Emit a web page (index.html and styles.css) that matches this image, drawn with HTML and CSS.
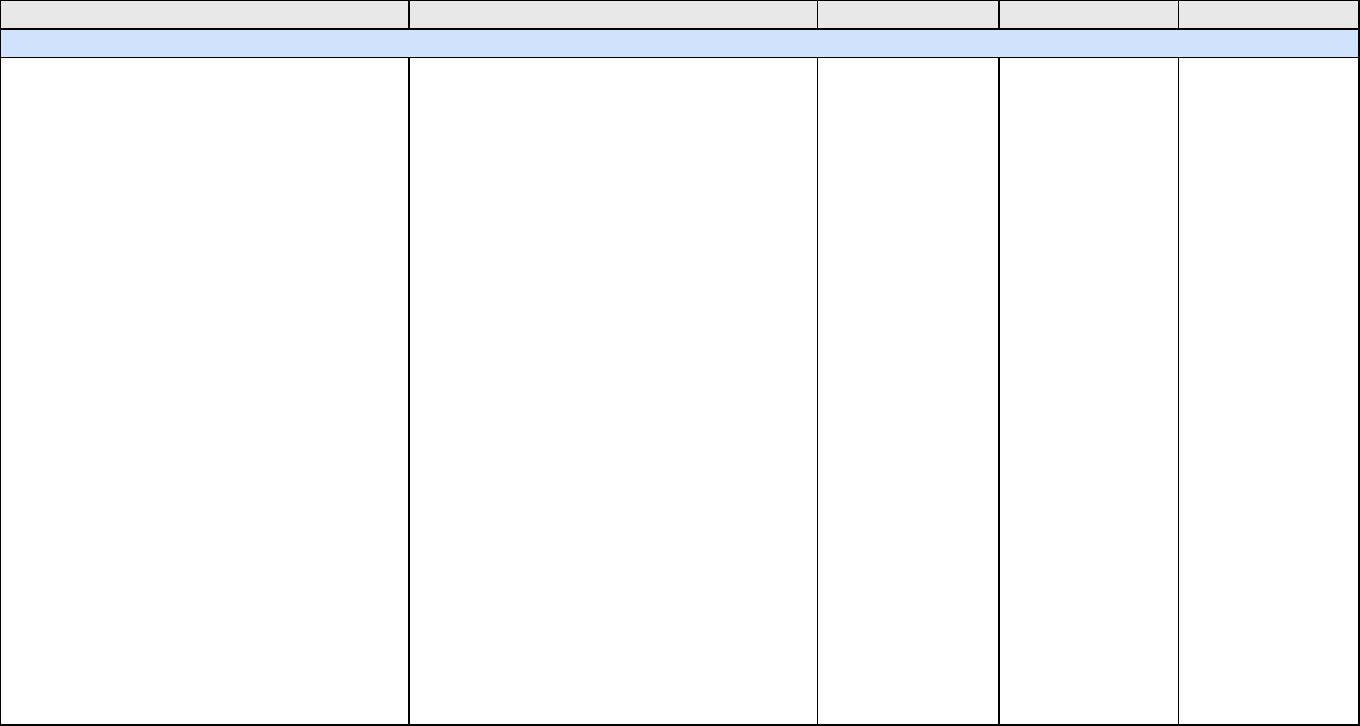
FILE: index.html
```html
<!DOCTYPE html>
<html lang="en">
<head>
    <meta charset="UTF-8">
    <meta name="viewport" content="width=device-width, initial-scale=1.0">
    <title>Sheet</title>
    <link rel="stylesheet" href="styles.css">
</head>
<body>
    <div class="sheet">
        <div class="row head-row">
            <div class="cell"></div>
            <div class="cell"></div>
            <div class="cell"></div>
            <div class="cell"></div>
            <div class="cell"></div>
        </div>
        <div class="band"></div>
        <div class="row body-row">
            <div class="cell"></div>
            <div class="cell"></div>
            <div class="cell"></div>
            <div class="cell"></div>
            <div class="cell"></div>
        </div>
    </div>
</body>
</html>
```

FILE: styles.css
```css
html, body {
    margin: 0;
    padding: 0;
    background-color: #fff;
    font-family: 'Liberation Sans', Arial, sans-serif;
}
.sheet {
    width: 1360px;
    height: 726px;
    display: flex;
    flex-direction: column;
    box-sizing: border-box;
}
.row {
    display: grid;
    grid-template-columns: 1px 409px 408px 182px 179px 181px;
}
.row::before {
    content: '';
    background-color: #000;
}
.cell {
    box-sizing: border-box;
    border-right: 1px solid #000;
}
.cell:nth-child(1),
.cell:nth-child(3),
.cell:nth-child(5) {
    border-right-width: 2px;
}
.head-row {
    height: 30px;
    border-top: 1px solid #000;
    border-bottom: 2px solid #000;
    box-sizing: border-box;
}
.head-row .cell {
    background-color: #e8e8e8;
}
.band {
    height: 28px;
    box-sizing: border-box;
    background-color: #cfe2fe;
    border-left: 1px solid #000;
    border-right: 2px solid #000;
    border-bottom: 1px solid #000;
}
.body-row {
    flex: 1;
    border-bottom: 2px solid #000;
    box-sizing: border-box;
}
.body-row .cell {
    background-color: #fff;
}
```
